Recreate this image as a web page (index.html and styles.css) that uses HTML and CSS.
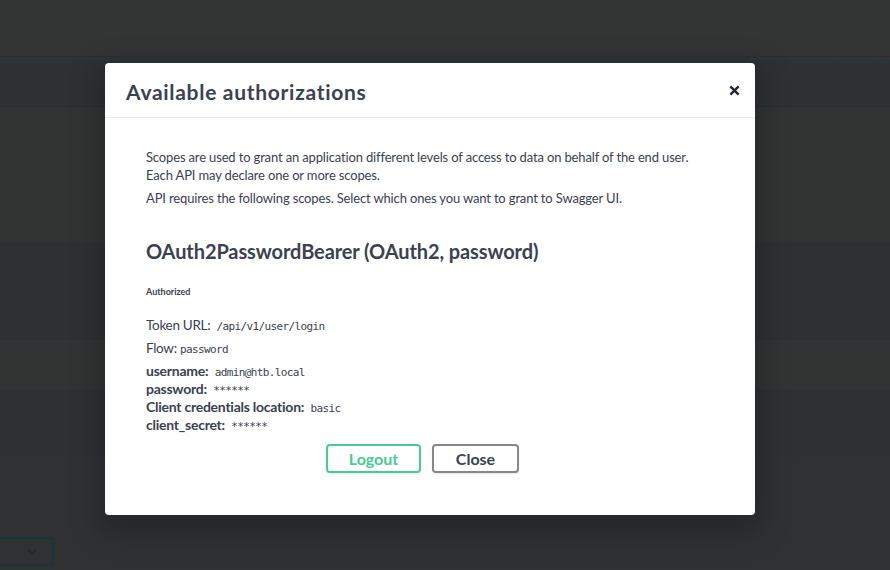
FILE: index.html
```html
<!DOCTYPE html>
<html>
<head>
<meta charset="utf-8">
<link rel="stylesheet" href="styles.css">
</head>
<body>
<div class="page">
  <div class="bg-top"></div>
  <div class="bg-gap"></div>
  <div class="bg-row bg-a h44"></div>
  <div class="bg-row bg-b h135"></div>
  <div class="bg-row bg-a h97"></div>
  <div class="bg-row bg-b h50"></div>
  <div class="bg-row bg-a h67"></div>
  <div class="bg-bottom">
    <div class="select-box">
      <svg width="12" height="8" viewBox="0 0 12 8"><path d="M2 2 L6 6 L10 2" fill="none" stroke="#1c2a33" stroke-width="2.2"/></svg>
    </div>
  </div>
</div>

<div class="modal">
  <div class="modal-header">
    <h3 class="modal-title">Available authorizations</h3>
    <button class="close-x" aria-label="close">
      <svg width="12" height="12" viewBox="0 0 12 12"><path d="M1.5 1.5 L10.5 10.5 M10.5 1.5 L1.5 10.5" stroke="#1e2733" stroke-width="2.6" stroke-linecap="butt"/></svg>
    </button>
  </div>
  <div class="modal-content">
    <div class="auth-container">
      <p class="para">Scopes are used to grant an application different levels of access to data on behalf of the end user.<br>Each API may declare one or more scopes.</p>
      <p class="para para-2">API requires the following scopes. Select which ones you want to grant to Swagger UI.</p>
      <h4 class="scheme-title">OAuth2PasswordBearer (OAuth2, password)</h4>
      <h6 class="status">Authorized</h6>
      <p class="info">Token URL: <code class="mono">/api/v1/user/login</code></p>
      <p class="info">Flow: <code class="mono flow">password</code></p>
      <div class="fields">
        <div class="field"><span class="label">username:</span> <code class="mono">admin@htb.local</code></div>
        <div class="field"><span class="label">password:</span> <code class="mono">******</code></div>
        <div class="field"><span class="label">Client credentials location:</span> <code class="mono">basic</code></div>
        <div class="field"><span class="label">client_secret:</span> <code class="mono">******</code></div>
      </div>
      <div class="btn-wrapper">
        <button class="btn btn-logout">Logout</button>
        <button class="btn btn-close">Close</button>
      </div>
    </div>
  </div>
</div>
</body>
</html>
```
FILE: styles.css
```css
html, body {
  margin: 0;
  padding: 0;
}
body {
  width: 890px;
  height: 570px;
  overflow: hidden;
  background: #2f3032;
  font-family: "Lato", "Liberation Sans", sans-serif;
  position: relative;
}
.page {
  display: flex;
  flex-direction: column;
  height: 570px;
}
.bg-top {
  height: 56px;
  background: #333534;
  border-bottom: 1px solid #2c2d2e;
}
.bg-gap {
  height: 5px;
  background: #313233;
  border-bottom: 1px dashed #1a3a40;
}
.bg-row {
  border-bottom: 1px solid #2a3234;
}
.bg-a { background: #2f3032; }
.bg-b { background: #323433; }
.h44 { height: 43px; border-bottom-color: #1c3238; }
.h135 { height: 135px; }
.h97 { height: 96px; }
.h50 { height: 49px; }
.h67 { height: 66px; }
.bg-bottom {
  flex: 1;
  background: #303133;
  display: flex;
  align-items: flex-end;
  padding-bottom: 4px;
}
.select-box {
  height: 25px;
  width: 38px;
  margin-left: -2px;
  border: 2px solid #1c3340;
  border-radius: 4px;
  display: flex;
  align-items: center;
  justify-content: flex-end;
  padding-right: 14px;
}
.select-box svg { display: block; }

.modal {
  position: absolute;
  left: 105px;
  top: 63px;
  width: 650px;
  background: #fff;
  border-radius: 4px;
  box-shadow: 0 10px 30px 8px rgba(0,0,0,0.22);
  color: #3b4151;
}
.modal-header {
  display: flex;
  align-items: center;
  justify-content: space-between;
  height: 55px;
  padding: 0 11px 0 21px;
  border-bottom: 1px solid #ebebeb;
  box-sizing: border-box;
}
.modal-title {
  margin: 0;
  font-size: 21px;
  font-weight: 700;
  color: #3b4151;
  letter-spacing: 0.7px;
  padding-top: 3px;
}
.close-x {
  border: 0;
  background: none;
  padding: 0;
  width: 20px;
  height: 20px;
  display: flex;
  align-items: center;
  justify-content: center;
  cursor: pointer;
}
.close-x svg { width: 11px; height: 11px; }
.modal-content {
  padding: 20px;
}
.auth-container {
  padding: 10px 20px 22px 21px;
}
.para {
  margin: 0;
  font-size: 13px;
  line-height: 18px;
  letter-spacing: -0.15px;
  color: #3b4151;
}
.para-2 {
  margin-top: 5px;
}
.scheme-title {
  margin: 32px 0 0;
  font-size: 20px;
  line-height: 24px;
  font-weight: 700;
  letter-spacing: -0.1px;
  color: #3b4151;
}
.status {
  margin: 23px 0 0;
  font-size: 9px;
  line-height: 12px;
  font-weight: 700;
  color: #3b4151;
}
.info {
  margin: 18px 0 0;
  font-size: 13.5px;
  line-height: 18px;
  letter-spacing: -0.3px;
  color: #3b4151;
}
.info + .info { margin-top: 5px; }
.mono {
  font-family: "DejaVu Sans Mono", "Liberation Mono", monospace;
  font-size: 11px;
  line-height: 10px;
  letter-spacing: -0.62px;
  color: #3b4151;
  margin-left: 3px;
}
.mono.flow { margin-left: 0; }
.fields {
  margin-top: 5px;
  display: flex;
  flex-direction: column;
}
.field {
  font-size: 14px;
  line-height: 18px;
  letter-spacing: -0.25px;
}
.label {
  font-weight: 700;
}
.btn-wrapper {
  display: flex;
  justify-content: center;
  padding-top: 10px;
  gap: 11px;
}
.btn {
  font-family: "Lato", "Liberation Sans", sans-serif;
  font-size: 16px;
  font-weight: 700;
  height: 29px;
  border-radius: 4px;
  background: #fff;
  border: 2px solid #888;
  box-shadow: 0 1px 2px rgba(0,0,0,0.1);
  padding: 0;
  cursor: pointer;
}
.btn-logout {
  width: 95px;
  border-color: #49cc90;
  color: #49cc90;
}
.btn-close {
  width: 87px;
  color: #3b4151;
  margin-right: 16px;
}
```
